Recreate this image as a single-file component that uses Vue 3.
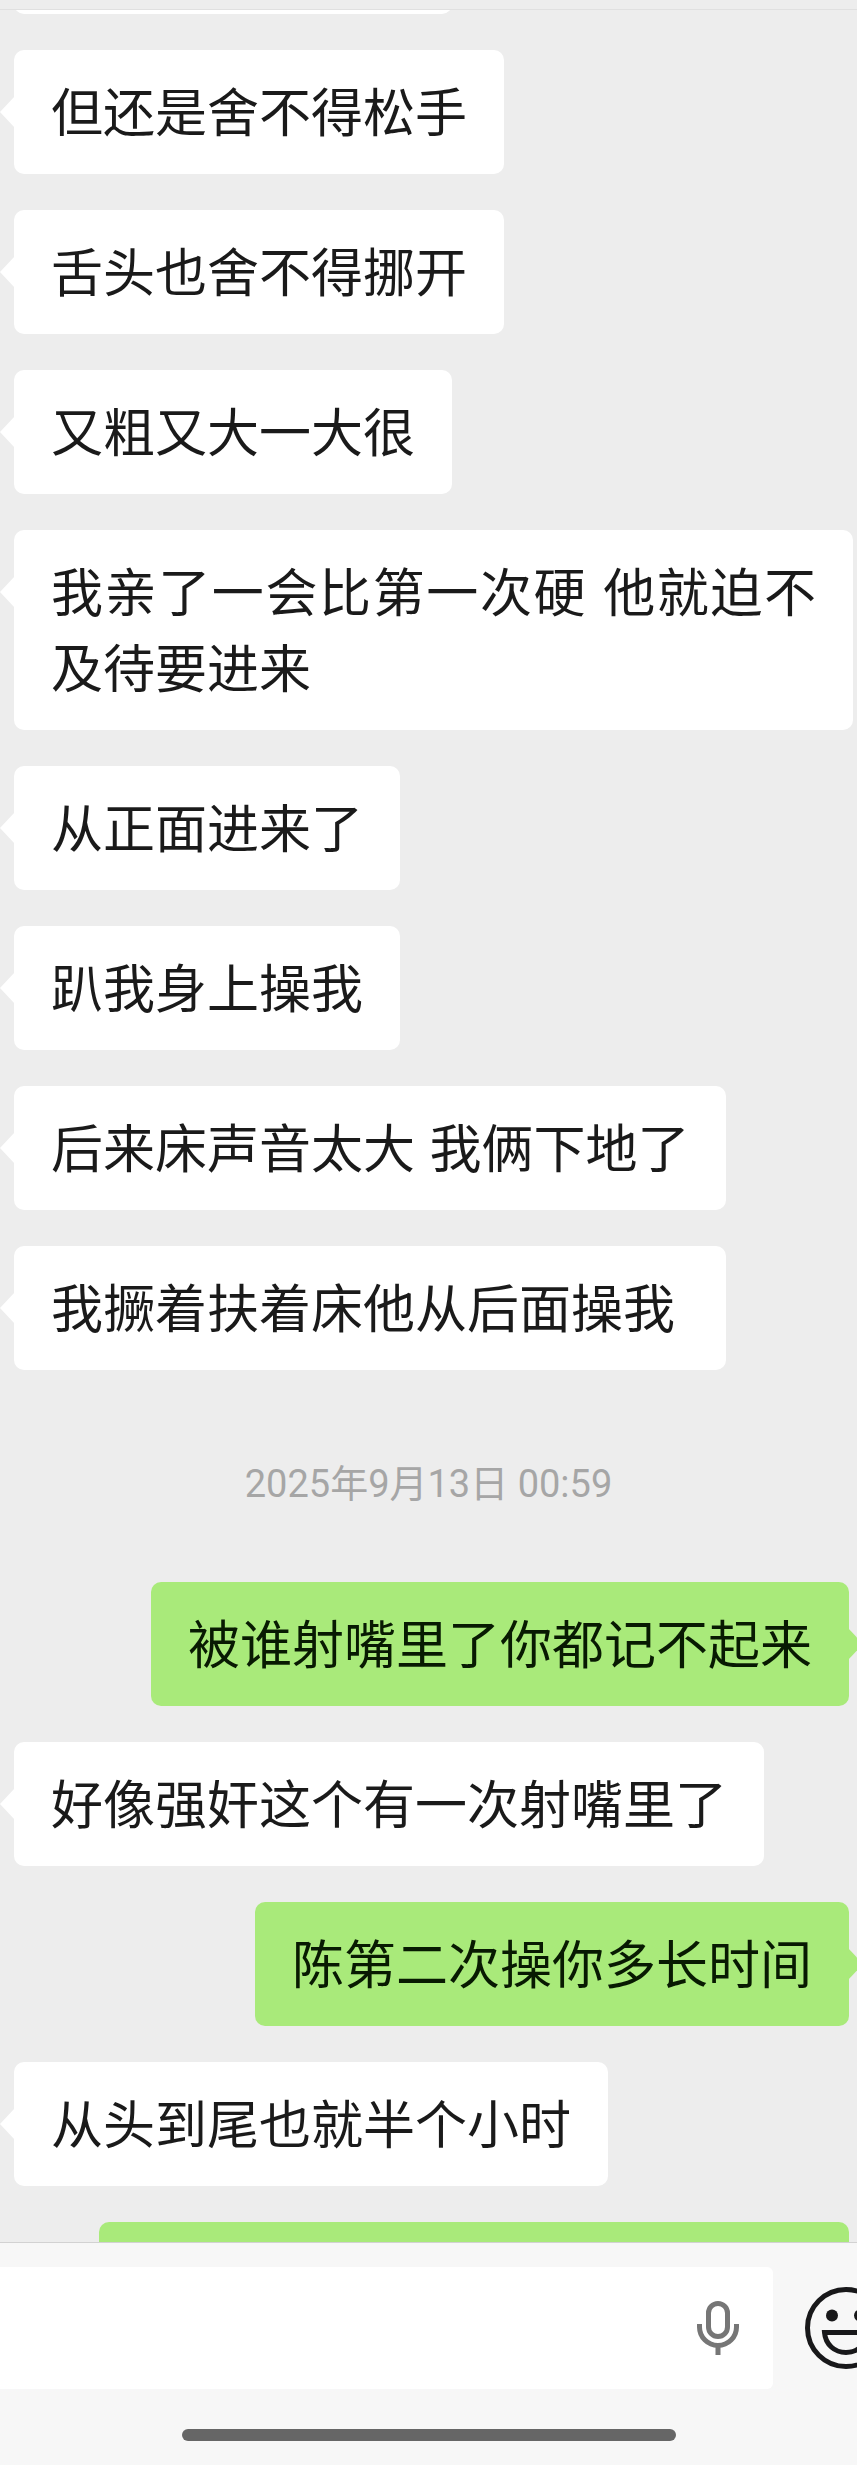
<script setup>
import { ref } from 'vue'

const draft = ref('')

const earlier = [
  { id: 1, side: 'in', text: '但还是舍不得松手' },
  { id: 2, side: 'in', text: '舌头也舍不得挪开' },
  { id: 3, side: 'in', text: '又粗又大一大很' },
  { id: 4, side: 'in', text: '我亲了一会比第一次硬 他就迫不及待要进来' },
  { id: 5, side: 'in', text: '从正面进来了' },
  { id: 6, side: 'in', text: '趴我身上操我' },
  { id: 7, side: 'in', text: '后来床声音太大 我俩下地了' },
  { id: 8, side: 'in', text: '我撅着扶着床他从后面操我\u00a0' }
]

const later = [
  { id: 9, side: 'out', text: '被谁射嘴里了你都记不起来' },
  { id: 10, side: 'in', text: '好像强奸这个有一次射嘴里了' },
  { id: 11, side: 'out', text: '陈第二次操你多长时间' },
  { id: 12, side: 'in', text: '从头到尾也就半个小时' }
]
</script>

<template>
  <div class="page">
    <header class="topbar"></header>
    <main class="chat">
      <div class="peek peek-top"><div class="bubble in"></div></div>
      <div v-for="m in earlier" :key="m.id" class="row" :class="m.side">
        <p class="bubble" :class="m.side">{{ m.text }}</p>
      </div>
      <time class="stamp" datetime="2025-09-13T00:59">2025年9月13日 00:59</time>
      <div v-for="m in later" :key="m.id" class="row" :class="m.side">
        <p class="bubble" :class="m.side">{{ m.text }}</p>
      </div>
      <div class="peek peek-bottom"><div class="bubble out"></div></div>
    </main>
    <footer class="composer">
      <div class="bar">
        <div class="field">
          <input v-model="draft" type="text" aria-label="输入消息" />
          <button type="button" class="mic" aria-label="语音输入">
            <svg width="42" height="54" viewBox="0 0 42 54" fill="none" stroke="#767676" stroke-width="5">
              <rect x="11.500" y="2.500" width="19" height="33" rx="9.500" />
              <path d="M2.500 23v3a18.500 18.500 0 0 0 37 0v-3M21 44.500V54" />
            </svg>
          </button>
        </div>
        <button type="button" class="emoji" aria-label="表情">
          <svg width="82" height="82" viewBox="0 0 82 82" fill="none" stroke="#18181a" stroke-width="5">
            <circle cx="41" cy="41" r="38.500" />
            <circle cx="27" cy="28.500" r="6" fill="#18181a" stroke="none" />
            <circle cx="55" cy="28.500" r="6" fill="#18181a" stroke="none" />
            <path d="M19.500 45.500h43c-1 12-10 20-21.500 20s-20.500-8-21.500-20z" />
          </svg>
        </button>
      </div>
      <div class="home"></div>
    </footer>
  </div>
</template>

<style>
body {
  background: #ededed;
}
</style>

<style scoped>
.page {
  display: flex;
  flex-direction: column;
  min-height: 100vh;
  overflow: hidden;
  background: #ededed;
  font-family: "Liberation Sans", "Noto Sans CJK SC", sans-serif;
}

.topbar {
  height: 9px;
  border-bottom: 1px solid #e0e0e0;
}

.chat {
  flex: 1;
  display: flex;
  flex-direction: column;
  gap: 36px;
}

.row {
  display: flex;
  padding: 0 4px 0 14px;
}

.row.out {
  justify-content: flex-end;
  padding-right: 8px;
}

.bubble {
  position: relative;
  box-sizing: border-box;
  min-height: 124px;
  margin: 0;
  padding: 26px 37px 22px;
  border-radius: 10px;
  font-size: 52px;
  line-height: 76px;
  text-align: justify;
}

.bubble.in {
  background: #fff;
  color: #1a1a1a;
}

.bubble.out {
  background: #a9ea7a;
  color: #081a02;
}

.row .bubble::before {
  content: "";
  position: absolute;
  top: 46px;
  width: 15px;
  height: 32px;
  background: inherit;
}

.row .bubble.in::before {
  right: 100%;
  margin-right: -1px;
  clip-path: polygon(100% 0, 0 50%, 100% 100%);
}

.row .bubble.out::before {
  left: 100%;
  margin-left: -1px;
  clip-path: polygon(0 0, 100% 50%, 0 100%);
}

.peek {
  display: flex;
  overflow: hidden;
}

.peek-top {
  height: 4px;
  align-items: flex-end;
  padding-left: 14px;
}

.peek-top .bubble {
  width: 438px;
}

.peek-bottom {
  height: 20px;
  align-items: flex-start;
  justify-content: flex-end;
  padding-right: 8px;
}

.peek-bottom .bubble {
  width: 750px;
}

.stamp {
  padding: 58px 0 42px;
  font-family: Roboto, "Noto Sans CJK SC", sans-serif;
  font-size: 38px;
  line-height: 40px;
  text-align: center;
  color: #a6a6a6;
}

.composer {
  padding: 24px 0;
  border-top: 1px solid #d2d2d2;
  background: #f7f7f7;
}

.bar {
  display: flex;
  align-items: center;
  gap: 32px;
  margin-right: -30px;
}

.field {
  flex: 1;
  min-width: 0;
  display: flex;
  align-items: center;
  height: 122px;
  padding-right: 34px;
  border-radius: 0 6px 6px 0;
  background: #fff;
}

input {
  flex: 1;
  min-width: 0;
  height: 100%;
  padding: 0 24px;
  border: 0;
  outline: 0;
  background: transparent;
  font: inherit;
  font-size: 52px;
}

button {
  flex: none;
  padding: 0;
  border: 0;
  background: none;
}

svg {
  display: block;
}

.home {
  width: 494px;
  height: 12px;
  margin: 40px auto 0;
  border-radius: 6px;
  background: #666;
}
</style>
